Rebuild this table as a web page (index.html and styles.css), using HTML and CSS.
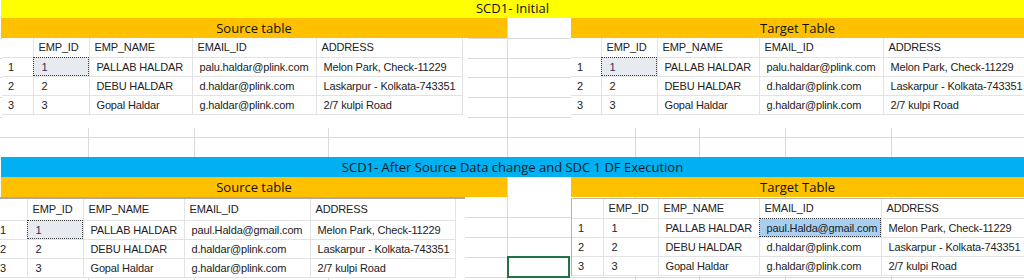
FILE: index.html
```html
<!DOCTYPE html>
<html>
<head>
<meta charset="utf-8">
<title>SCD1</title>
<link rel="stylesheet" href="styles.css">
</head>
<body>
<div class="sheet">
  <div class="band band-yellow">SCD1- Initial</div>
  <div class="section section-top">
    <div class="panel panel-left">
      <div class="bar bar-left">Source table</div>
      <div class="tablebox box-src1">
        <table class="grid src1">
          <colgroup><col><col><col><col><col><col></colgroup>
          <tr class="head"><td class="num"></td><td>EMP_ID</td><td>EMP_NAME</td><td>EMAIL_ID</td><td>ADDRESS</td><td class="fill"></td></tr>
          <tr><td class="num">1</td><td class="sel id">1</td><td>PALLAB HALDAR</td><td>palu.haldar@plink.com</td><td>Melon Park, Check-11229</td><td class="fill"></td></tr>
          <tr><td class="num">2</td><td class="id">2</td><td>DEBU HALDAR</td><td>d.haldar@plink.com</td><td>Laskarpur - Kolkata-743351</td><td class="fill"></td></tr>
          <tr><td class="num">3</td><td class="id">3</td><td>Gopal Haldar</td><td>g.haldar@plink.com</td><td>2/7 kulpi Road</td><td class="fill"></td></tr>
        </table>
      </div>
    </div>
    <div class="panel panel-gap"></div>
    <div class="panel panel-right">
      <div class="bar">Target Table</div>
      <div class="tablebox box-tgt1">
        <table class="grid tgt1">
          <colgroup><col><col><col><col><col></colgroup>
          <tr class="head"><td class="num"></td><td>EMP_ID</td><td>EMP_NAME</td><td>EMAIL_ID</td><td>ADDRESS</td></tr>
          <tr><td class="num">1</td><td class="sel id">1</td><td>PALLAB HALDAR</td><td>palu.haldar@plink.com</td><td>Melon Park, Check-11229</td></tr>
          <tr><td class="num">2</td><td class="id">2</td><td>DEBU HALDAR</td><td>d.haldar@plink.com</td><td>Laskarpur - Kolkata-743351</td></tr>
          <tr><td class="num">3</td><td class="id">3</td><td>Gopal Haldar</td><td>g.haldar@plink.com</td><td>2/7 kulpi Road</td></tr>
        </table>
      </div>
    </div>
  </div>
  <div class="band band-blue">SCD1- After Source Data change and SDC 1 DF Execution</div>
  <div class="section section-bottom">
    <div class="panel panel-left">
      <div class="bar bar-left">Source table</div>
      <div class="tablebox box-src2">
        <table class="grid src2">
          <colgroup><col><col><col><col><col><col></colgroup>
          <tr class="head"><td class="num"></td><td>EMP_ID</td><td>EMP_NAME</td><td>EMAIL_ID</td><td>ADDRESS</td><td class="fill"></td></tr>
          <tr><td class="num">1</td><td class="sel id">1</td><td>PALLAB HALDAR</td><td>paul.Halda@gmail.com</td><td>Melon Park, Check-11229</td><td class="fill"></td></tr>
          <tr><td class="num">2</td><td class="id">2</td><td>DEBU HALDAR</td><td>d.haldar@plink.com</td><td>Laskarpur - Kolkata-743351</td><td class="fill"></td></tr>
          <tr><td class="num">3</td><td class="id">3</td><td>Gopal Haldar</td><td>g.haldar@plink.com</td><td>2/7 kulpi Road</td><td class="fill"></td></tr>
        </table>
      </div>
    </div>
    <div class="panel panel-gap">
      <div class="active-cell"></div>
    </div>
    <div class="panel panel-right">
      <div class="bar">Target Table</div>
      <div class="tablebox box-tgt2">
        <table class="grid tgt2">
          <colgroup><col><col><col><col><col></colgroup>
          <tr class="head"><td class="num"></td><td>EMP_ID</td><td>EMP_NAME</td><td>EMAIL_ID</td><td>ADDRESS</td></tr>
          <tr><td class="num">1</td><td class="id">1</td><td>PALLAB HALDAR</td><td class="sel sel-blue">paul.Halda@gmail.com</td><td>Melon Park, Check-11229</td></tr>
          <tr><td class="num">2</td><td class="id">2</td><td>DEBU HALDAR</td><td>d.haldar@plink.com</td><td>Laskarpur - Kolkata-743351</td></tr>
          <tr><td class="num">3</td><td class="id">3</td><td>Gopal Haldar</td><td>g.haldar@plink.com</td><td>2/7 kulpi Road</td></tr>
        </table>
      </div>
    </div>
  </div>
</div>
</body>
</html>
```

FILE: styles.css
```css
* { box-sizing: border-box; }

html, body {
  margin: 0;
  padding: 0;
  background: #ffffff;
}

body {
  width: 1024px;
  height: 280px;
  overflow: hidden;
  font-family: "Liberation Sans", Arial, sans-serif;
}

.sheet {
  width: 1024px;
  background-image: linear-gradient(to right,
    transparent 88px, #dadada 88px, #dadada 89px, transparent 89px,
    transparent 194px, #dadada 194px, #dadada 195px, transparent 195px,
    transparent 328px, #dadada 328px, #dadada 329px, transparent 329px,
    transparent 507px, #dadada 507px, #dadada 508px, transparent 508px,
    transparent 635px, #dadada 635px, #dadada 636px, transparent 636px,
    transparent 699px, #dadada 699px, #dadada 700px, transparent 700px,
    transparent 785px, #dadada 785px, #dadada 786px, transparent 786px,
    transparent 891px, #dadada 891px, #dadada 892px, transparent 892px);
}

/* title bands */
.band {
  margin-left: 1px;
  font-family: "Open Sans", "Liberation Sans", sans-serif;
  font-size: 13px;
  text-align: center;
  color: #121212;
}

.band-yellow {
  height: 18px;
  line-height: 17px;
  background: #ffff00;
}

.band-blue {
  height: 20px;
  line-height: 20px;
  background: #00b0f0;
  color: #0e1a24;
}

/* sections */
.section {
  display: grid;
  grid-template-columns: 508px 63px 453px;
}

.section-top {
  height: 139px;
  background-image: linear-gradient(to bottom,
    transparent 20px, #dadada 20px, #dadada 21px, transparent 21px,
    transparent 40px, #dadada 40px, #dadada 41px, transparent 41px,
    transparent 59px, #dadada 59px, #dadada 60px, transparent 60px,
    transparent 79px, #dadada 79px, #dadada 80px, transparent 80px,
    transparent 99px, #dadada 99px, #dadada 100px, transparent 100px,
    transparent 119px, #dadada 119px, #dadada 120px, transparent 120px);
}

.section-bottom {
  height: 103px;
  background-image: linear-gradient(to bottom,
    transparent 40px, #dadada 40px, #dadada 41px, transparent 41px,
    transparent 60px, #dadada 60px, #dadada 61px, transparent 61px,
    transparent 80px, #dadada 80px, #dadada 81px, transparent 81px,
    transparent 100px, #dadada 100px, #dadada 101px, transparent 101px);
}

.panel {
  display: flex;
  flex-direction: column;
  min-width: 0;
}

.bar {
  height: 20px;
  line-height: 20px;
  background: #ffc000;
  font-family: "Open Sans", "Liberation Sans", sans-serif;
  font-size: 13px;
  text-align: center;
  color: #121212;
}

.bar-left {
  margin-left: 1px;
  width: 506px;
}

/* table images */
.tablebox {
  background: #ffffff;
  align-self: flex-start;
}

.box-src1 {
  margin-left: 2px;
  padding-bottom: 13px;
}

.box-tgt1 {
  padding-bottom: 13px;
  align-self: stretch;
}

.box-src2 {
  margin-left: -6px;
  border-top: 2px solid #a9a9a9;
}

.box-tgt2 {
  margin-top: 1px;
  border-top: 1px solid #b4b4b4;
  border-left: 1px solid #b4b4b4;
  align-self: stretch;
}

.grid {
  border-collapse: collapse;
  table-layout: fixed;
  font-size: 11px;
  letter-spacing: -0.15px;
  color: #222222;
}

.grid td {
  height: 19px;
  padding: 0 0 0 7px;
  border: 1px solid #e3e3e3;
  white-space: nowrap;
  overflow: hidden;
  vertical-align: middle;
}

.grid tr:first-child td { border-top: none; }
.grid td:first-child { border-left: none; padding-left: 6px; }

.grid tr.head td { padding-left: 5px; }

.grid td.id { padding-left: 8px; }

.grid td.fill {
  border: none;
}

.grid td.sel {
  background: #e7eaee;
  outline: 1px dotted #3c3c3c;
  outline-offset: -1px;
  color: #2e2a5a;
}

.grid td.sel-blue {
  background: #a8cff2;
  color: #1c1c1c;
}

/* column widths per table image */
.src1 { width: 466px; }
.src1 col:nth-child(1) { width: 31px; }
.src1 col:nth-child(2) { width: 56px; }
.src1 col:nth-child(3) { width: 103px; }
.src1 col:nth-child(4) { width: 124px; }
.src1 col:nth-child(5) { width: 146px; }
.src1 col:nth-child(6) { width: 6px; }

.tgt1 { width: 453px; }
.tgt1 col:nth-child(1) { width: 30px; }
.tgt1 col:nth-child(2) { width: 56px; }
.tgt1 col:nth-child(3) { width: 102px; }
.tgt1 col:nth-child(4) { width: 124px; }
.tgt1 col:nth-child(5) { width: 141px; }

.src2 { width: 471px; }
.src2 col:nth-child(1) { width: 33px; }
.src2 col:nth-child(2) { width: 56px; }
.src2 col:nth-child(3) { width: 101px; }
.src2 col:nth-child(4) { width: 126px; }
.src2 col:nth-child(5) { width: 145px; }
.src2 col:nth-child(6) { width: 10px; }

.src2 tr.head td { height: 21px; }

.tgt2 { width: 452px; }
.tgt2 col:nth-child(1) { width: 31px; }
.tgt2 col:nth-child(2) { width: 55px; }
.tgt2 col:nth-child(3) { width: 101px; }
.tgt2 col:nth-child(4) { width: 122px; }
.tgt2 col:nth-child(5) { width: 143px; }

/* Excel active cell */
.active-cell {
  margin-top: 79px;
  margin-left: -1px;
  width: 63px;
  height: 22px;
  border: 2px solid #217346;
}
```
